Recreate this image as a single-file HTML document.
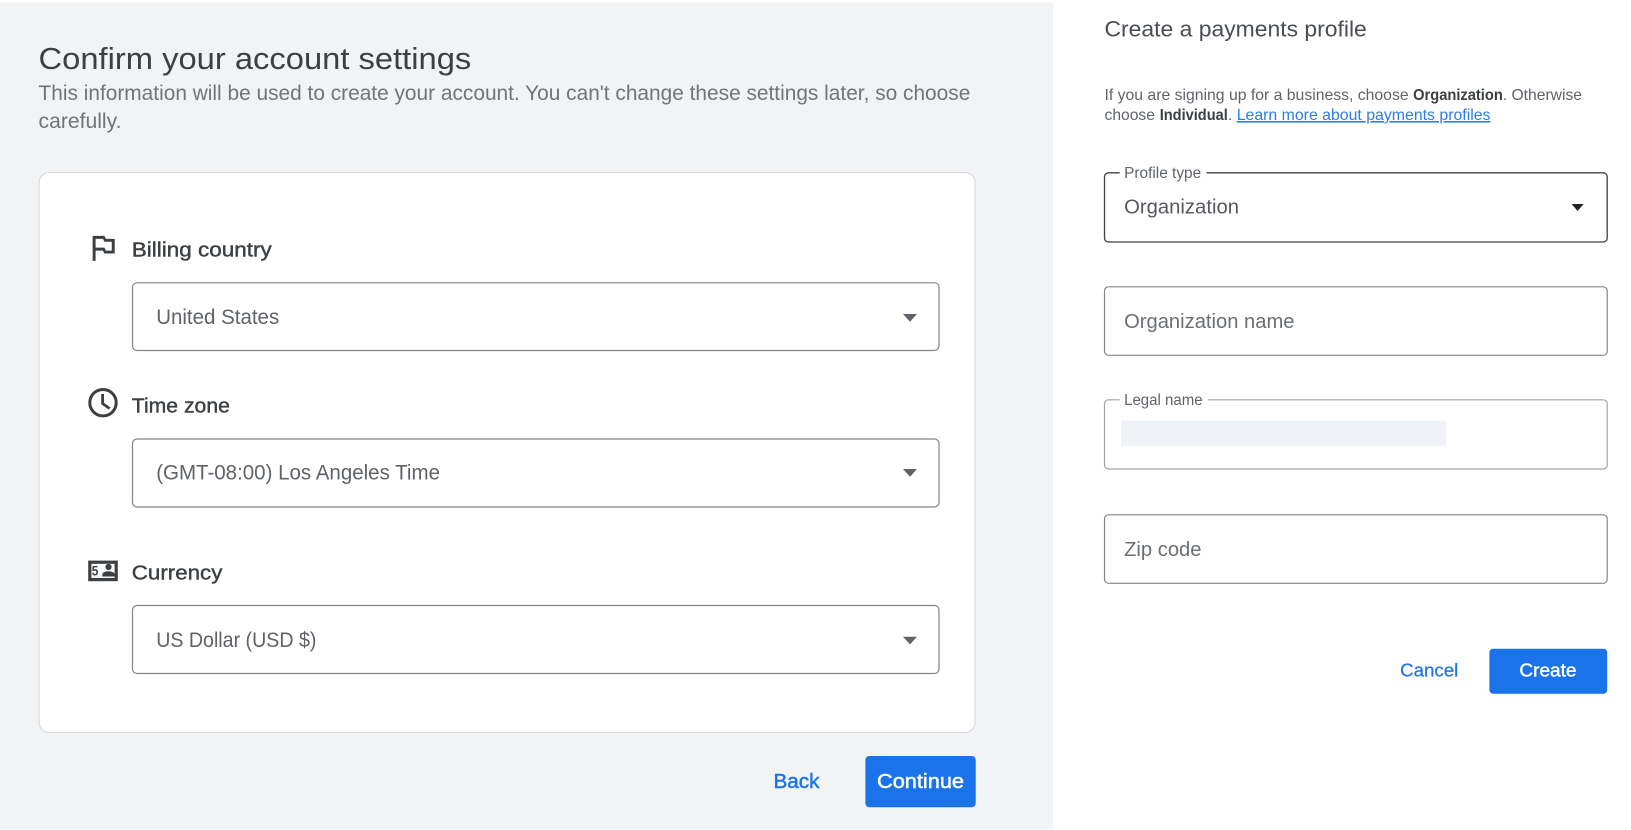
<!DOCTYPE html>
<html lang="en"><head><meta charset="utf-8"><title>Confirm your account settings</title>
<style>
html,body{margin:0;padding:0;background:#fff;width:1631px;height:830px;overflow:hidden}
svg{display:block;position:absolute;left:0;top:0;filter:blur(.3px)}
text{font-family:"Liberation Sans",sans-serif;white-space:pre}
.l{fill:#3c4043;font-size:20px;stroke:#3c4043;stroke-width:.4px}
.v{fill:#5f6368;font-size:21px}
.p{fill:#6b6f73;font-size:20.5px}
.s{fill:#5f6368;font-size:15.5px}
.d{fill:#5f6368;font-size:16px}
.b{fill:#3c4043;font-size:16px;font-weight:bold}
.box{fill:#fff;stroke:#80868b;stroke-width:1.2}
</style></head>
<body>
<svg width="1631" height="830" viewBox="0 0 1631 830" xmlns="http://www.w3.org/2000/svg">
<rect width="1631" height="830" fill="#fff"/>
<rect x="0" y="2.5" width="1053" height="827" fill="#f1f3f5"/>

<text x="38.5" y="69" font-size="31" fill="#3c4043" textLength="432.8" lengthAdjust="spacingAndGlyphs">Confirm your account settings</text>
<text x="38.5" y="100" font-size="21" fill="#70757a" textLength="931.8" lengthAdjust="spacingAndGlyphs">This information will be used to create your account. You can't change these settings later, so choose</text>
<text x="38.5" y="128" font-size="21" fill="#70757a" textLength="83" lengthAdjust="spacingAndGlyphs">carefully.</text>

<rect x="39.2" y="172.5" width="935.8" height="560" rx="10" fill="#fff" stroke="#dadce0" stroke-width="1.2"/>

<path transform="translate(85.3 230) scale(1.47)" fill="#3c4043" d="M14 6l-1-2H5v17h2v-7h5l1 2h7V6h-6zm4 8h-4l-1-2H7V6h5l1 2h5v6z"/>
<text class="l" x="131.8" y="256.7" textLength="140" lengthAdjust="spacingAndGlyphs">Billing country</text>
<rect class="box" x="132.5" y="282.8" width="806.5" height="67.7" rx="4.5"/>
<text class="v" x="156.2" y="324" textLength="123" lengthAdjust="spacingAndGlyphs">United States</text>
<path d="M903 314h14l-7 7.7z" fill="#5f6368"/>

<circle cx="103" cy="402.7" r="13.2" fill="none" stroke="#3c4043" stroke-width="3"/>
<path d="M102.6 394v9.5l7 5" fill="none" stroke="#3c4043" stroke-width="2.8"/>
<text class="l" x="131.8" y="412.7" textLength="98.1" lengthAdjust="spacingAndGlyphs">Time zone</text>
<rect class="box" x="132.5" y="439" width="806.5" height="68" rx="4.5"/>
<text class="v" x="156.2" y="479.3" textLength="283.8" lengthAdjust="spacingAndGlyphs">(GMT-08:00) Los Angeles Time</text>
<path d="M903 469h14l-7 7.7z" fill="#5f6368"/>

<rect x="89.8" y="562.2" width="26.4" height="17.4" fill="#f4f5f6" stroke="#3c4043" stroke-width="3.2"/>
<rect x="92" y="564.5" width="22" height="10.5" fill="#fff"/>
<text x="91.8" y="575.3" font-size="13.5" font-weight="bold" fill="#3c4043" textLength="6.6" lengthAdjust="spacingAndGlyphs">5</text>
<circle cx="108.5" cy="567" r="3.1" fill="#3c4043"/>
<path d="M102.3 576.5v-2c0-2.2 3.2-3.3 6.2-3.3s6.2 1.1 6.2 3.3v2z" fill="#3c4043"/>
<text class="l" x="131.8" y="579.3" textLength="90.6" lengthAdjust="spacingAndGlyphs">Currency</text>
<rect class="box" x="132.5" y="605.5" width="806.5" height="68" rx="4.5"/>
<text class="v" x="156.2" y="647" textLength="160.2" lengthAdjust="spacingAndGlyphs">US Dollar (USD $)</text>
<path d="M903 636.7h14l-7 7.7z" fill="#5f6368"/>

<text x="773.5" y="788" font-size="20" fill="#1a73e8" stroke="#1a73e8" stroke-width=".45" textLength="46" lengthAdjust="spacingAndGlyphs">Back</text>
<rect x="865.4" y="756" width="110.3" height="51.3" rx="4" fill="#1a73e8"/>
<text x="877" y="788" font-size="20" fill="#fff" stroke="#fff" stroke-width=".5" textLength="87" lengthAdjust="spacingAndGlyphs">Continue</text>

<text x="1104.5" y="36.7" font-size="22.5" fill="#4a4e52" textLength="262.3" lengthAdjust="spacingAndGlyphs">Create a payments profile</text>
<text class="d" x="1104.5" y="100" textLength="304.1" lengthAdjust="spacingAndGlyphs">If you are signing up for a business, choose</text>
<text class="b" x="1413.1" y="100" textLength="89.7" lengthAdjust="spacingAndGlyphs">Organization</text>
<text class="d" x="1502.8" y="100" textLength="79.2" lengthAdjust="spacingAndGlyphs">. Otherwise</text>
<text class="d" x="1104.5" y="120" textLength="50.4" lengthAdjust="spacingAndGlyphs">choose</text>
<text class="b" x="1159.7" y="120" textLength="68.1" lengthAdjust="spacingAndGlyphs">Individual</text>
<text class="d" x="1227.8" y="120">.</text>
<text x="1236.7" y="120" font-size="16" fill="#2b7de9" text-decoration="underline" textLength="253.8" lengthAdjust="spacingAndGlyphs">Learn more about payments profiles</text>

<rect x="1104.5" y="172.8" width="502.7" height="69.2" rx="4" fill="#fff" stroke="#3c4043" stroke-width="1.3"/>
<rect x="1119.7" y="168" width="86.7" height="10" fill="#fff"/>
<text class="s" x="1124.1" y="178" textLength="77.1" lengthAdjust="spacingAndGlyphs">Profile type</text>
<text x="1124.1" y="213.3" font-size="20.5" fill="#55595d" textLength="114.9" lengthAdjust="spacingAndGlyphs">Organization</text>
<path d="M1571.6 204h12l-6 7z" fill="#202124"/>

<rect class="box" x="1104.5" y="286.8" width="502.7" height="68.5" rx="4"/>
<text class="p" x="1124.1" y="328" textLength="170.4" lengthAdjust="spacingAndGlyphs">Organization name</text>

<rect x="1104.5" y="399.8" width="502.7" height="69.2" rx="4" fill="#fff" stroke="#a0a4a8" stroke-width="1.2"/>
<rect x="1119.7" y="395" width="88.1" height="10" fill="#fff"/>
<text class="s" x="1124.1" y="405" textLength="78.5" lengthAdjust="spacingAndGlyphs">Legal name</text>
<rect x="1121.1" y="420.5" width="325" height="25.5" fill="#eff3f7"/>

<rect class="box" x="1104.5" y="514.8" width="502.7" height="68.5" rx="4"/>
<text class="p" x="1124.1" y="556" textLength="77.4" lengthAdjust="spacingAndGlyphs">Zip code</text>

<text x="1400.1" y="676.7" font-size="18" fill="#1a73e8" stroke="#1a73e8" stroke-width=".2" textLength="58.2" lengthAdjust="spacingAndGlyphs">Cancel</text>
<rect x="1489.4" y="648.7" width="117.8" height="45" rx="3.5" fill="#1a73e8"/>
<text x="1519.4" y="676.7" font-size="18" fill="#fff" stroke="#fff" stroke-width=".4" textLength="57.1" lengthAdjust="spacingAndGlyphs">Create</text>
</svg>
</body></html>
